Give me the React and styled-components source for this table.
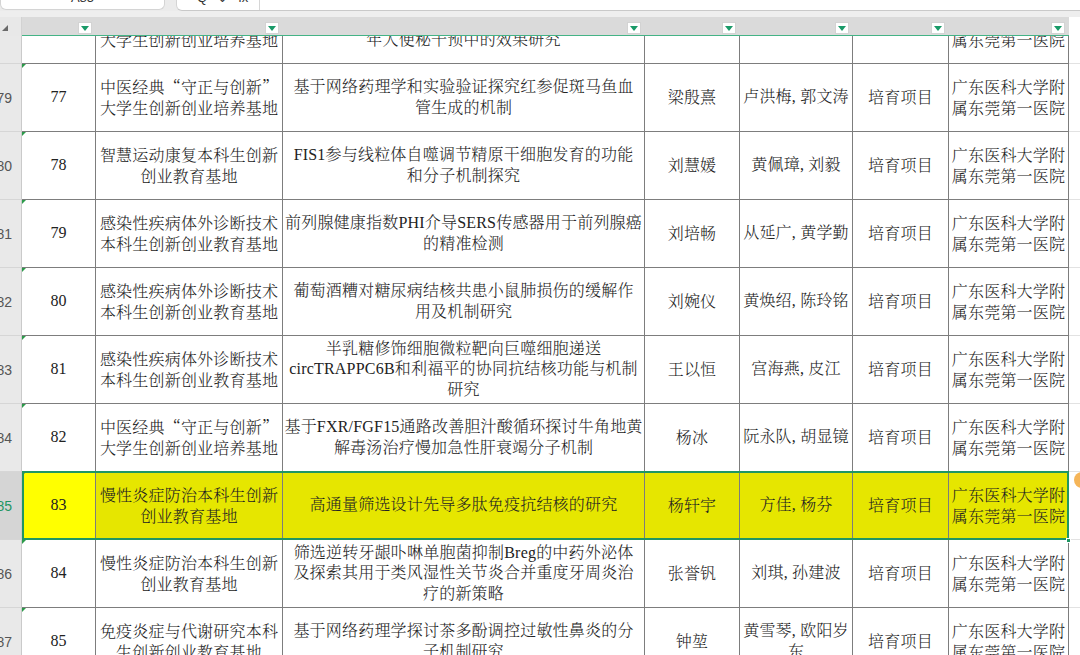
import styled, { createGlobalStyle } from 'styled-components';

const CJK = '"Noto Serif CJK SC", "Noto Sans CJK SC", serif';
const MIXED = '"Liberation Serif", "Noto Serif CJK SC", "Noto Sans CJK SC", serif';
const COLS = '74px 187px 362px 95px 113px 96px 120px 1fr';
const LINE = '#7d7d7d';
const GREEN = '#1f9663';

const HOSP = ['广东医科大学附', '属东莞第一医院'];

const rows = [
  {
    rn: 78,
    no: '',
    base: ['中医经典“守正与创新”', '大学生创新创业培养基地'],
    title: ['探讨益生菌制剂在老', '年人便秘干预中的效果研究'],
    person: [''],
    tutor: [''],
    kind: '',
  },
  {
    rn: 79,
    no: '77',
    base: ['中医经典“守正与创新”', '大学生创新创业培养基地'],
    title: ['基于网络药理学和实验验证探究红参促斑马鱼血', '管生成的机制'],
    person: ['梁殷熹'],
    tutor: ['卢洪梅, 郭文涛'],
  },
  {
    rn: 80,
    no: '78',
    base: ['智慧运动康复本科生创新', '创业教育基地'],
    title: ['FIS1参与线粒体自噬调节精原干细胞发育的功能', '和分子机制探究'],
    person: ['刘慧媛'],
    tutor: ['黄佩璋, 刘毅'],
  },
  {
    rn: 81,
    no: '79',
    base: ['感染性疾病体外诊断技术', '本科生创新创业教育基地'],
    title: ['前列腺健康指数PHI介导SERS传感器用于前列腺癌', '的精准检测'],
    person: ['刘培畅'],
    tutor: ['从延广, 黄学勤'],
  },
  {
    rn: 82,
    no: '80',
    base: ['感染性疾病体外诊断技术', '本科生创新创业教育基地'],
    title: ['葡萄酒糟对糖尿病结核共患小鼠肺损伤的缓解作', '用及机制研究'],
    person: ['刘婉仪'],
    tutor: ['黄焕绍, 陈玲铭'],
  },
  {
    rn: 83,
    no: '81',
    base: ['感染性疾病体外诊断技术', '本科生创新创业教育基地'],
    title: ['半乳糖修饰细胞微粒靶向巨噬细胞递送', 'circTRAPPC6B和利福平的协同抗结核功能与机制', '研究'],
    person: ['王以恒'],
    tutor: ['宫海燕, 皮江'],
  },
  {
    rn: 84,
    no: '82',
    base: ['中医经典“守正与创新”', '大学生创新创业培养基地'],
    title: ['基于FXR/FGF15通路改善胆汁酸循环探讨牛角地黄', '解毒汤治疗慢加急性肝衰竭分子机制'],
    person: ['杨冰'],
    tutor: ['阮永队, 胡显镜'],
  },
  {
    rn: 85,
    no: '83',
    sel: true,
    base: ['慢性炎症防治本科生创新', '创业教育基地'],
    title: ['高通量筛选设计先导多肽免疫抗结核的研究'],
    person: ['杨轩宇'],
    tutor: ['方佳, 杨芬'],
  },
  {
    rn: 86,
    no: '84',
    base: ['慢性炎症防治本科生创新', '创业教育基地'],
    title: ['筛选逆转牙龈卟啉单胞菌抑制Breg的中药外泌体', '及探索其用于类风湿性关节炎合并重度牙周炎治', '疗的新策略'],
    person: ['张誉钒'],
    tutor: ['刘琪, 孙建波'],
  },
  {
    rn: 87,
    no: '85',
    base: ['免疫炎症与代谢研究本科', '生创新创业教育基地'],
    title: ['基于网络药理学探讨茶多酚调控过敏性鼻炎的分', '子机制研究'],
    person: ['钟堃'],
    tutor: ['黄雪琴, 欧阳岁', '东'],
  },
];

const GlobalStyle = createGlobalStyle`
  html, body {
    margin: 0;
    padding: 0;
    background: #fff;
    overflow: hidden;
  }
  * {
    box-sizing: border-box;
  }
`;

const Screen = styled.div`
  position: relative;
  width: 1080px;
  height: 655px;
  overflow: hidden;
  display: flex;
  flex-direction: column;
  background: #fff;
`;

const TopBar = styled.div`
  flex: none;
  height: 11px;
  display: flex;
  gap: 11px;
  background: #ebebeb;
`;

const NameBox = styled.div`
  width: 165px;
  height: 10px;
  background: #fff;
  border: 1px solid #d4d4d4;
  border-top: none;
  border-radius: 0 0 6px 6px;
  overflow: hidden;
  display: flex;
  justify-content: center;
  align-items: flex-start;
`;

const FormulaBox = styled.div`
  flex: 1;
  height: 11px;
  background: #fff;
  border-left: 1px solid #d4d4d4;
  border-bottom: 1px solid #c9c9c9;
  border-radius: 0 0 0 6px;
  overflow: hidden;
  display: flex;
`;

const FxArea = styled.div`
  width: 83px;
  border-right: 1px solid #d6d6d6;
  padding-left: 20px;
  display: flex;
  gap: 10px;
  align-items: flex-start;
`;

const ClipText = styled.span`
  display: block;
  margin-top: -9px;
  font: 13px/14px 'Liberation Sans', 'Noto Sans', sans-serif;
  color: #333;
`;

const Strip = styled.div`
  flex: none;
  height: 6px;
  background: #eeeeee;
`;

const HeaderRow = styled.div`
  flex: none;
  display: grid;
  grid-template-columns: 22px 1fr;
  height: 19px;
`;

const Corner = styled.div`
  background: #e8e8e8;
  border-right: 1px solid #d2d2d2;
  display: flex;
  align-items: center;
  padding: 2px 0 0 2px;
`;

const HeadCells = styled.div`
  display: grid;
  grid-template-columns: ${COLS};
`;

const HeadCell = styled.div`
  display: flex;
  justify-content: flex-end;
  align-items: flex-end;
  padding: 0 4px 1px 0;
  background: ${(p) => (p.$blank ? '#fff' : '#dadada')};
  border-bottom: 1px solid ${(p) => (p.$blank ? '#fff' : '#44b386')};
`;

const FilterBtn = styled.div`
  width: 14px;
  height: 12px;
  background: #fff;
  border: 1px solid #d3d3d3;
  display: flex;
  align-items: center;
  justify-content: center;
`;

const Viewport = styled.div`
  flex: 1;
  overflow: hidden;
`;

const Rows = styled.div`
  margin-top: -40px;
`;

const Row = styled.div`
  display: grid;
  grid-template-columns: 22px 1fr;
  height: 68px;
`;

const RowHead = styled.div`
  display: flex;
  align-items: center;
  justify-content: flex-end;
  padding-right: 9px;
  overflow: hidden;
  white-space: nowrap;
  background: ${(p) => (p.$sel ? '#d5d5d5' : '#e9e9e9')};
  border-right: 1px solid #cacaca;
  border-bottom: 1px solid #d6d6d6;
  color: ${(p) => (p.$sel ? GREEN : '#555')};
  font: 14px 'Liberation Sans', 'Noto Sans', sans-serif;
`;

const Cells = styled.div`
  position: relative;
  display: grid;
  grid-template-columns: ${COLS};
  background: ${(p) => (p.$sel ? '#e6e600' : '#fff')};

  &::after {
    content: '';
    display: ${(p) => (p.$sel ? 'block' : 'none')};
    position: absolute;
    top: -1px;
    left: 0;
    right: 11px;
    bottom: 0;
    border: 2px solid ${GREEN};
    pointer-events: none;
    z-index: 2;
  }
`;

const Handle = styled.span`
  position: absolute;
  right: 9px;
  bottom: -3px;
  width: 5px;
  height: 5px;
  background: ${GREEN};
  border: 1px solid #fff;
  z-index: 3;
`;

const Cell = styled.div`
  position: relative;
  display: flex;
  flex-direction: column;
  align-items: center;
  justify-content: center;
  text-align: center;
  white-space: nowrap;
  overflow: hidden;
  border-right: 1px solid ${LINE};
  border-bottom: 1px solid ${LINE};
  font-family: ${(p) => (p.$num ? '"Liberation Serif", serif' : p.$mixed ? MIXED : CJK)};
  font-size: 16px;
  font-weight: ${(p) => (p.$num ? 400 : 300)};
  line-height: 20.5px;
  letter-spacing: ${(p) => (p.$num ? '0' : '0.2px')};
  color: #222;
  background: ${(p) => (p.$yellow ? '#ffff00' : 'transparent')};

  span {
    display: block;
    height: 20.5px;
  }

  &::before {
    content: '';
    display: ${(p) => (p.$num ? 'block' : 'none')};
    position: absolute;
    top: 0;
    left: 0;
    border-top: 4px solid #2c9a4a;
    border-right: 4px solid transparent;
  }
`;

const Spare = styled.div`
  border-bottom: 1px solid #e2e2e2;
  background: #fff;
`;

const Dot = styled.span`
  position: absolute;
  top: 472px;
  left: 1074px;
  width: 16px;
  height: 16px;
  border-radius: 50%;
  background: #f3a83b;
  opacity: 0.85;
`;

const Lines = ({ items }) =>
  items.map((t, i) => <span key={i}>{t}</span>);

const Filter = () => (
  <FilterBtn>
    <svg width='8' height='5' viewBox='0 0 8 5'>
      <polygon points='0,0 8,0 4,5' fill='#1a9a68' />
    </svg>
  </FilterBtn>
);

const App = () => {
  return (
    <Screen>
      <GlobalStyle />
      <TopBar>
        <NameBox>
          <ClipText>A85</ClipText>
        </NameBox>
        <FormulaBox>
          <FxArea>
            <ClipText>Q</ClipText>
            <ClipText>⌄</ClipText>
            <ClipText>fx</ClipText>
          </FxArea>
        </FormulaBox>
      </TopBar>
      <Strip />
      <HeaderRow>
        <Corner>
          <svg width='6' height='6' viewBox='0 0 6 6'>
            <polygon points='6,0 6,6 0,6' fill='#6a6a6a' />
          </svg>
        </Corner>
        <HeadCells>
          {[0, 1, 2, 3, 4, 5, 6].map((i) => (
            <HeadCell key={i}>
              <Filter />
            </HeadCell>
          ))}
          <HeadCell $blank />
        </HeadCells>
      </HeaderRow>
      <Viewport>
        <Rows>
          {rows.map((r) => (
            <Row key={r.rn}>
              <RowHead $sel={r.sel}>{r.rn}</RowHead>
              <Cells $sel={r.sel}>
                <Cell $num $yellow={r.sel}>{r.no}</Cell>
                <Cell>
                  <Lines items={r.base} />
                </Cell>
                <Cell $mixed>
                  <Lines items={r.title} />
                </Cell>
                <Cell>
                  <Lines items={r.person} />
                </Cell>
                <Cell $mixed>
                  <Lines items={r.tutor} />
                </Cell>
                <Cell>{r.kind === undefined ? '培育项目' : r.kind}</Cell>
                <Cell>
                  <Lines items={HOSP} />
                </Cell>
                <Spare />
                {r.sel && <Handle />}
              </Cells>
            </Row>
          ))}
        </Rows>
      </Viewport>
      <Dot />
    </Screen>
  );
};

export default App;
